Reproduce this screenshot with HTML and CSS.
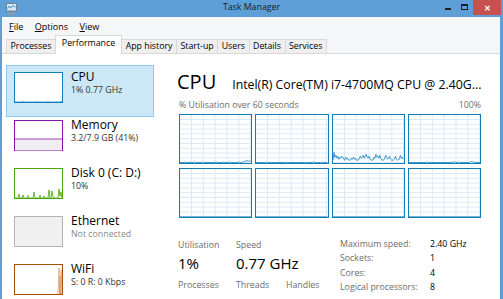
FILE: index.html
```html
<!DOCTYPE html>
<html>
<head>
<meta charset="utf-8">
<title>Task Manager</title>
<link rel="stylesheet" href="styles.css">
</head>
<body>
<div class="window">
  <div class="titlebar">
    <svg class="appicon" width="11" height="12" viewBox="0 0 11 12">
      <rect x="0.5" y="0.5" width="10" height="7.5" fill="#d6ecf8" stroke="#6f8090"/>
      <polyline points="1.5,5.5 3.3,3 4.8,5.2 6.8,2.4 9.5,4.2" fill="none" stroke="#2a7fc0" stroke-width="0.9"/>
      <rect x="4" y="8.5" width="3" height="1.5" fill="#8a8a8a"/>
      <rect x="2" y="10" width="7" height="1.5" fill="#9a9a9a"/>
    </svg>
    <div class="title">Task Manager</div>
    <div class="controls">
      <div class="ctl"><span class="min"></span></div>
      <div class="ctl"><span class="max"></span></div>
      <div class="ctl close">&#x2715;</div>
    </div>
  </div>
  <div class="frame">
    <div class="menubar">
      <span><u>F</u>ile</span>
      <span><u>O</u>ptions</span>
      <span><u>V</u>iew</span>
    </div>
    <div class="tabs">
      <div class="tab">Processes</div>
      <div class="tab active">Performance</div>
      <div class="tab">App history</div>
      <div class="tab">Start-up</div>
      <div class="tab">Users</div>
      <div class="tab">Details</div>
      <div class="tab">Services</div>
    </div>
    <div class="content">
      <div class="sidebar">
        <div class="item selected">
          <svg class="thumb" viewBox="0 0 49 31" preserveAspectRatio="none">
            <rect x="0.5" y="0.5" width="48" height="30" fill="#fff" stroke="#117dbb"/>
            <polyline points="1,30 8,30 9,29.3 10,30 22,30 23,29.4 24,30 33,30 34,29.4 35,30 46,30 47,29.3 48,30" fill="none" stroke="#117dbb" stroke-width="0.7"/>
          </svg>
          <div class="itext">
            <div class="iname">CPU</div>
            <div class="isub">1% 0.77 GHz</div>
          </div>
        </div>
        <div class="item">
          <svg class="thumb" viewBox="0 0 49 31" preserveAspectRatio="none">
            <rect x="0.5" y="0.5" width="48" height="30" fill="#fff" stroke="#8b12ae"/>
            <rect x="1" y="19" width="47" height="11.5" fill="#f1eef2"/>
            <line x1="1" y1="19" x2="48" y2="19" stroke="#8b12ae" stroke-width="0.8"/>
          </svg>
          <div class="itext">
            <div class="iname">Memory</div>
            <div class="isub">3.2/7.9 GB (41%)</div>
          </div>
        </div>
        <div class="item">
          <svg class="thumb" viewBox="0 0 49 31" preserveAspectRatio="none">
            <rect x="0.5" y="0.5" width="48" height="30" fill="#fff" stroke="#4da60c"/>
            <polyline points="1,30 4,30 5,26 6,30 8,30 9,27 10,30 13,30 14,27.5 15,30 19,30 20,24 21,30 25,30 26,27 27,30 29,30 30,28 31,30 34,30 35,22 36,30 37,30 38,23 39,29 41,30 44,30 45,21 46,28 47,24 48,30" fill="#eaf5e2" stroke="#4da60c" stroke-width="0.8"/>
          </svg>
          <div class="itext">
            <div class="iname">Disk 0 (C: D:)</div>
            <div class="isub">10%</div>
          </div>
        </div>
        <div class="item">
          <svg class="thumb" viewBox="0 0 49 31" preserveAspectRatio="none">
            <rect x="0.5" y="0.5" width="48" height="30" fill="#f0f0f0" stroke="#b4b4b4"/>
          </svg>
          <div class="itext">
            <div class="iname">Ethernet</div>
            <div class="isub grey">Not connected</div>
          </div>
        </div>
        <div class="item">
          <svg class="thumb" viewBox="0 0 49 31" preserveAspectRatio="none">
            <rect x="0.5" y="0.5" width="48" height="30" fill="#fff" stroke="#a74f01"/>
            <polyline points="44,30 45,4 45.5,30 46,12 46.6,30 47.2,6 47.8,30" fill="none" stroke="#c98a55" stroke-width="0.6"/>
          </svg>
          <div class="itext">
            <div class="iname">WiFi</div>
            <div class="isub">S: 0 R: 0 Kbps</div>
          </div>
        </div>
      </div>
      <div class="detail">
        <div class="heading">
          <div class="htitle">CPU</div>
          <div class="hname">Intel(R) Core(TM) i7-4700MQ CPU @ 2.40G...</div>
        </div>
        <div class="caption">
          <span>% Utilisation over 60 seconds</span>
          <span>100%</span>
        </div>
        <div class="graphs">
          <div class="graph">
            <svg viewBox="0 0 73 50" preserveAspectRatio="none">
              <polyline points="0,49.5 4,49.5 5,48.8 6,49.5 14,49.5 15,48.7 16,49.5 22,49.5 23,48.8 24,49.5 36,49.5 37,48.8 38,49.5 44,49.5 45,48.7 46,49.5 50,49.5 51,49 53,49.5 60,49.5 61,48.8 62,49.5 64,49.5 65,48.4 66,48.9 67,47.6 68,48.6 69,47.2 70,48.2 71,47.4 72,48.6" fill="#eef5fb" stroke="#117dbb" stroke-width="0.8"/>
            </svg>
          </div>
          <div class="graph">
            <svg viewBox="0 0 73 50" preserveAspectRatio="none">
              <polyline points="0,49.5 10,49.5 11,48.9 12,49.5 30,49.5 31,49 32,49.5 50,49.5 51,48.9 52,49.5 58,49.5 59,48.8 60,49.5 66,49.5 67,49 68,49.5 73,49.5" fill="#eef5fb" stroke="#117dbb" stroke-width="0.8"/>
            </svg>
          </div>
          <div class="graph">
            <svg viewBox="0 0 73 50" preserveAspectRatio="none">
              <polyline points="0,47 1,39 2,44 3,42 4,45 5,43 6,46 7,44 8,45 9,43 10,44 11,46 12,47 13,44 14,46 15,45 16,47 18,47 19,45 20,46 21,44 22,46 23,45 24,47 26,47 27,45 28,43 29,45 30,44 31,42 32,45 33,43 34,41 35,44 36,45 37,43 38,46 39,47 41,47 42,44 43,45 44,41 45,44 46,43 47,45 48,42 49,45 50,47 52,47 53,45 54,42 55,44 56,46 57,45 58,43 59,46 60,47 62,47 63,46 64,43 65,46 66,47 68,46 69,42 70,45 71,44 72,46" fill="#eef5fb" stroke="#117dbb" stroke-width="0.8"/>
            </svg>
          </div>
          <div class="graph">
            <svg viewBox="0 0 73 50" preserveAspectRatio="none">
              <polyline points="0,49.5 18,49.5 19,48.8 20,49.5 44,49.5 45,48.7 46,49.5 47,48.4 48,49.5 50,49.5 51,48.6 52,49.5 62,49.5 63,48.6 64,48.3 65,49 66,48.4 67,49.5 73,49.5" fill="#eef5fb" stroke="#117dbb" stroke-width="0.8"/>
            </svg>
          </div>
          <div class="graph">
            <svg viewBox="0 0 73 50" preserveAspectRatio="none">
              <polyline points="0,49.6 73,49.6" fill="none" stroke="#117dbb" stroke-width="0.6"/>
            </svg>
          </div>
          <div class="graph">
            <svg viewBox="0 0 73 50" preserveAspectRatio="none">
              <polyline points="0,49.6 73,49.6" fill="none" stroke="#117dbb" stroke-width="0.6"/>
            </svg>
          </div>
          <div class="graph">
            <svg viewBox="0 0 73 50" preserveAspectRatio="none">
              <polyline points="0,49.6 73,49.6" fill="none" stroke="#117dbb" stroke-width="0.6"/>
            </svg>
          </div>
          <div class="graph">
            <svg viewBox="0 0 73 50" preserveAspectRatio="none">
              <polyline points="0,49.6 73,49.6" fill="none" stroke="#117dbb" stroke-width="0.6"/>
            </svg>
          </div>
        </div>
        <div class="stats">
          <div class="stats-left">
            <div class="lbl">Utilisation</div>
            <div class="lbl">Speed</div>
            <div class="lbl"></div>
            <div class="val">1%</div>
            <div class="val wide">0.77 GHz</div>
            <div class="lbl low">Processes</div>
            <div class="lbl low">Threads</div>
            <div class="lbl low">Handles</div>
          </div>
          <div class="stats-right">
            <div class="k">Maximum speed:</div><div class="v">2.40 GHz</div>
            <div class="k">Sockets:</div><div class="v">1</div>
            <div class="k">Cores:</div><div class="v">4</div>
            <div class="k">Logical processors:</div><div class="v">8</div>
          </div>
        </div>
      </div>
    </div>
  </div>
</div>
</body>
</html>
```
FILE: styles.css
```css
* { box-sizing: border-box; }
html, body {
  margin: 0;
  width: 503px;
  height: 299px;
  overflow: hidden;
  background: #fff;
  font-family: "Open Sans", "Noto Sans", sans-serif;
  font-size: 8.8px;
  color: #000;
}
.window {
  display: flex;
  flex-direction: column;
  height: 299px;
}
.titlebar {
  height: 17px;
  flex: none;
  background: #5f9fd8;
  display: grid;
  grid-template-columns: 1fr auto 1fr;
  align-items: start;
}
.appicon { margin: 3px 0 0 6px; display: block; }
.title {
  font-size: 8.8px;
  line-height: 15px;
  color: #1b1b1b;
}
.controls {
  justify-self: end;
  display: flex;
  height: 15px;
  padding-right: 2px;
}
.ctl {
  width: 16px;
  height: 15px;
  display: flex;
  align-items: center;
  justify-content: center;
}
.min {
  width: 6px;
  height: 2px;
  background: #1e1e1e;
  margin-top: 2px;
}
.max {
  width: 7px;
  height: 6px;
  border: 1px solid #1e1e1e;
  border-top-width: 2px;
  margin-top: -1px;
}
.ctl.close {
  width: 28px;
  margin-left: 1px;
  background: #c75050;
  color: #fff;
  font-size: 8px;
  font-weight: bold;
}
.frame {
  flex: 1;
  min-height: 0;
  display: flex;
  flex-direction: column;
  border-left: 2px solid #5f9fd8;
  border-right: 3px solid #5f9fd8;
}
.menubar {
  height: 18px;
  flex: none;
  background: #f5f6f7;
  display: flex;
  align-items: center;
  gap: 11.5px;
  padding-left: 7px;
  font-size: 9px;
}
.tabs {
  height: 19px;
  flex: none;
  background: #f5f6f7;
  display: flex;
  align-items: flex-end;
  padding-left: 5px;
  border-bottom: 1px solid #d9d9d9;
}
.tab {
  height: 14px;
  line-height: 13px;
  padding: 0 3.5px;
  margin-left: -1px;
  border: 1px solid #d9d9d9;
  border-bottom: none;
  background: #efefef;
  white-space: nowrap;
}
.tab.active {
  height: 19px;
  line-height: 15px;
  margin-bottom: -1px;
  padding: 0 6px;
  background: #fff;
  position: relative;
  z-index: 1;
}
.content {
  flex: 1;
  min-height: 0;
  display: flex;
  background: #fff;
}
.sidebar {
  width: 163px;
  flex: none;
  padding: 11px 0 0 4px;
}
.item {
  width: 148px;
  height: 52px;
  margin-bottom: -4px;
  padding: 6px 0 0 7px;
  border: 1px solid transparent;
  display: flex;
  align-items: flex-start;
  gap: 8px;
}
.item.selected {
  background: #cce8f7;
  border-color: #8fcbee;
}
.thumb {
  width: 49px;
  height: 31px;
  flex: none;
  display: block;
}
.itext { margin-top: -3px; }
.iname {
  font-size: 12px;
  line-height: 15px;
  white-space: nowrap;
}
.isub {
  font-size: 8.8px;
  line-height: 12px;
  color: #333;
  white-space: nowrap;
}
.isub.grey { color: #8a8a8a; }
.detail {
  flex: 1;
  min-width: 0;
  padding: 15px 19px 0 14px;
}
.heading {
  display: flex;
  align-items: baseline;
  gap: 16px;
  margin-left: -2px;
  height: 26px;
}
.htitle {
  font-size: 20px;
  line-height: 26px;
}
.hname {
  font-size: 12.3px;
  white-space: nowrap;
}
.caption {
  margin-top: 5px;
  display: flex;
  justify-content: space-between;
  line-height: 11px;
  color: #6d6d6d;
}
.graphs {
  margin-top: 3px;
  display: grid;
  grid-template-columns: repeat(4, 1fr);
  grid-auto-rows: 50px;
  gap: 4px 3px;
}
.graph {
  border: 1px solid #117dbb;
  background-color: #fff;
  background-image:
    linear-gradient(to right, #d9eaf5 1px, transparent 1px),
    linear-gradient(to bottom, #d9eaf5 1px, transparent 1px);
  background-size: 11.83px 100%, 100% 4.8px;
  background-position: 11px 0, 0 4px;
}
.graph svg {
  display: block;
  width: 100%;
  height: 100%;
}
.stats {
  margin-top: 19px;
  margin-left: -1px;
  display: grid;
  grid-template-columns: 162px auto;
}
.stats-left {
  padding-top: 1.7px;
  display: grid;
  grid-template-columns: 58px 50px auto;
  align-content: start;
}
.lbl {
  line-height: 13px;
  color: #6d6d6d;
  white-space: nowrap;
}
.lbl.low { margin-top: 5.4px; }
.val {
  font-size: 15px;
  line-height: 20px;
  margin-top: 1.6px;
  white-space: nowrap;
}
.val.wide { grid-column: 2 / span 2; }
.stats-right {
  display: grid;
  grid-template-columns: 90px auto;
  grid-auto-rows: 14.3px;
  line-height: 14.3px;
  align-content: start;
}
.k { color: #6d6d6d; white-space: nowrap; }
.v { white-space: nowrap; }
```
